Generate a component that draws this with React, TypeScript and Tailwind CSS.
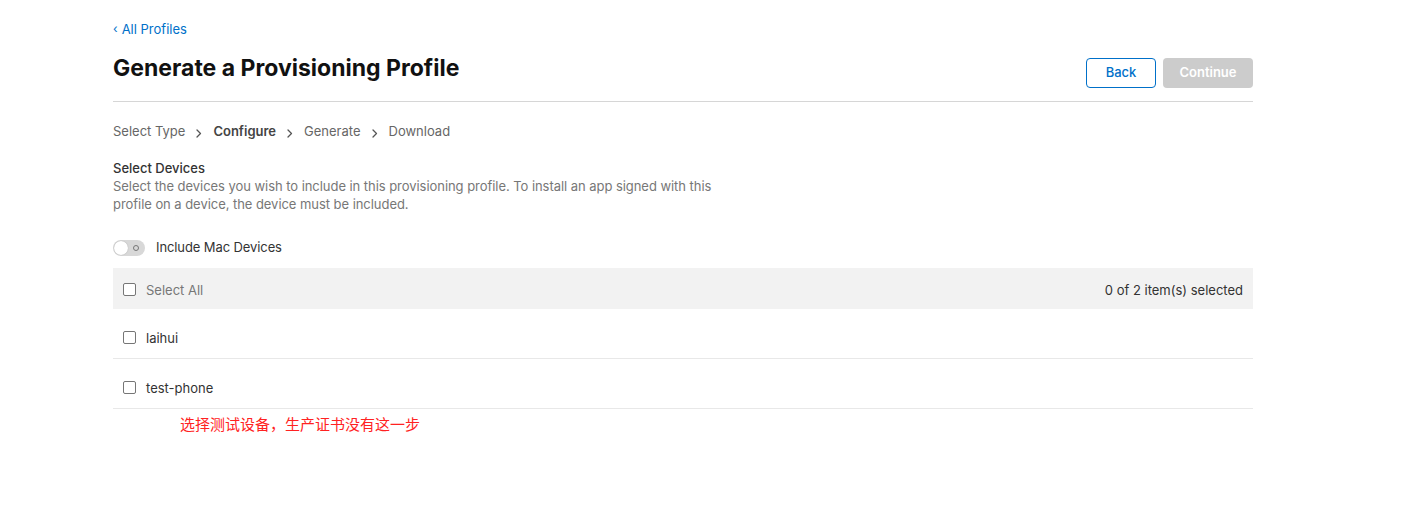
import React from "react";

function Chevron() {
  return (
    <svg width="6" height="9" viewBox="0 0 6 9" className="mx-[11px] mt-[4px]" fill="none">
      <path d="M1 1 L4.5 4.5 L1 8" stroke="#555" strokeWidth="1.3" strokeLinecap="round" strokeLinejoin="round" />
    </svg>
  );
}

function Checkbox() {
  return <div className="w-[13px] h-[13px] border border-[#767676] rounded-[2px] bg-white shrink-0 -mt-[3px]" />;
}

export default function App() {
  return (
    <div className="w-[1425px] h-[508px] bg-white" style={{ fontFamily: "Inter, 'Noto Sans', sans-serif" }}>
      <div className="ml-[113px] w-[1140px] pt-[21px]">
        <div className="text-[13px] leading-[16px] text-[#0070c9] flex items-center">
          <span className="mr-[4px] text-[12px]">‹</span>All Profiles
        </div>
        <div className="flex items-start justify-between mt-[14px] pb-[13px] border-b border-[#d6d6d6]">
          <h1 className="text-[23px] leading-[30px] font-bold text-[#111] mt-[2px]">Generate a Provisioning Profile</h1>
          <div className="flex gap-[7px] mt-[7px]">
            <button className="w-[70px] h-[30px] border border-[#0070c9] rounded-[4px] text-[#0070c9] text-[13px] font-medium bg-white">Back</button>
            <button className="w-[90px] h-[30px] rounded-[4px] bg-[#cccccc] text-white text-[13px] font-semibold">Continue</button>
          </div>
        </div>
        <div className="flex items-center mt-[20px] text-[13px] leading-[18px] text-[#666]">
          <span>Select Type</span>
          <Chevron />
          <span className="font-semibold text-[#444]">Configure</span>
          <Chevron />
          <span>Generate</span>
          <Chevron />
          <span>Download</span>
        </div>
        <div className="mt-[19px] text-[13px] leading-[18px] font-medium text-[#333]">Select Devices</div>
        <div className="text-[13px] leading-[18px] text-[#777] w-[610px] tracking-[-0.05px]">
          Select the devices you wish to include in this provisioning profile. To install an app signed with this profile on a device, the device must be included.
        </div>
        <div className="flex items-center mt-[25px]">
          <div className="relative w-[32px] h-[16px] rounded-full bg-[#d8d8d8]">
            <div className="absolute left-[1px] top-[1px] w-[14px] h-[14px] rounded-full bg-white shadow-[0_0_1px_rgba(0,0,0,0.3)]" />
            <div className="absolute right-[6px] top-[5px] w-[6px] h-[6px] rounded-full border border-[#777]" />
          </div>
          <span className="ml-[11px] text-[13px] text-[#333] tracking-[-0.1px]">Include Mac Devices</span>
        </div>
        <div className="mt-[10px] h-[41px] bg-[#f2f2f2] flex items-center px-[10px] justify-between pt-[5px]">
          <div className="flex items-center">
            <Checkbox />
            <span className="ml-[10px] text-[13px] text-[#777]">Select All</span>
          </div>
          <span className="text-[13px] text-[#333]">0 of 2 item(s) selected</span>
        </div>
        <div className="h-[50px] flex items-center px-[10px] border-b border-[#e8e8e8] pt-[11px]">
          <Checkbox />
          <span className="ml-[10px] text-[13px] text-[#333]">laihui</span>
        </div>
        <div className="h-[50px] flex items-center px-[10px] border-b border-[#e8e8e8] pt-[11px]">
          <Checkbox />
          <span className="ml-[10px] text-[13px] text-[#333]">test-phone</span>
        </div>
        <div className="ml-[67px] mt-[4px] text-[15px] leading-[22px] text-[#ff2222]" style={{ fontFamily: "'Noto Sans CJK SC', sans-serif" }}>
          选择测试设备，生产证书没有这一步
        </div>
      </div>
    </div>
  );
}
